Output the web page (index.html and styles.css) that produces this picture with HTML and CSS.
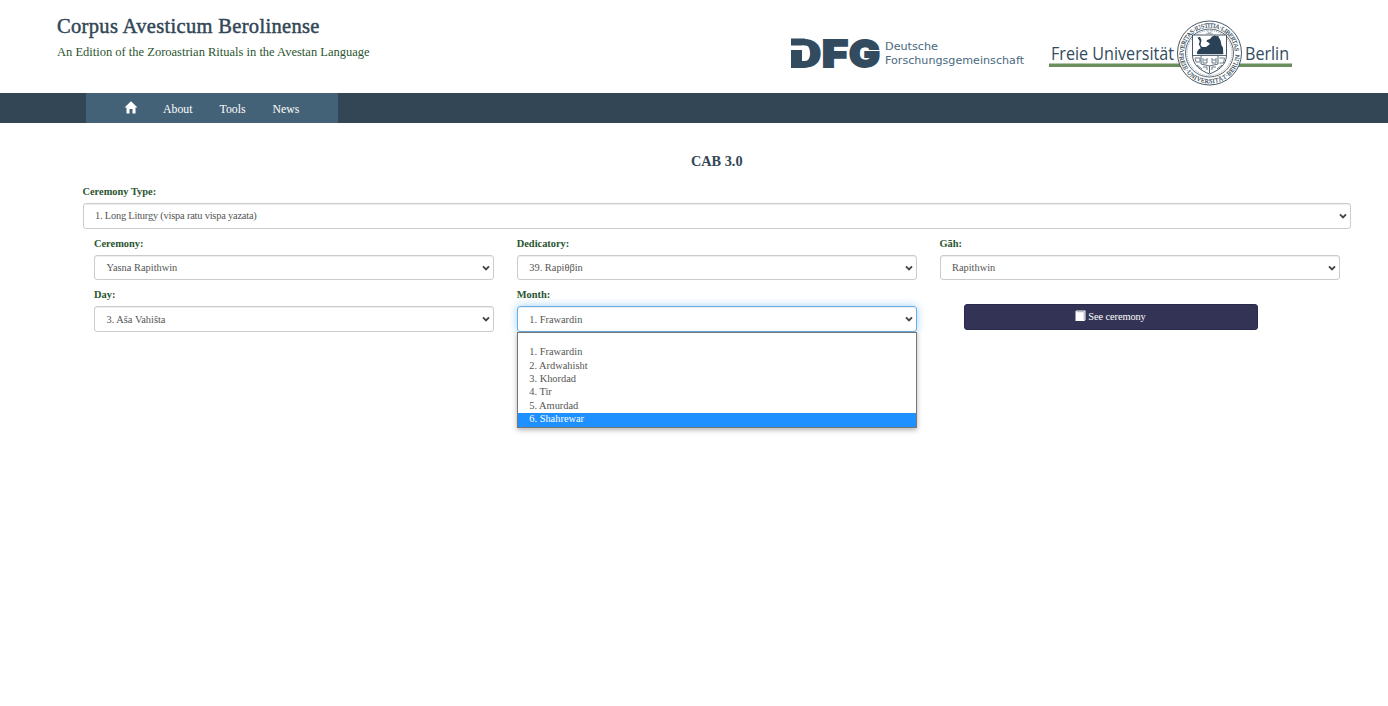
FILE: index.html
```html
<!DOCTYPE html>
<html lang="en">
<head>
<meta charset="utf-8">
<title>Corpus Avesticum Berolinense</title>
<link rel="stylesheet" href="styles.css">
</head>
<body>
<header class="header">
  <div class="brand">
    <h1 class="brand-title">Corpus Avesticum Berolinense</h1>
    <p class="brand-sub">An Edition of the Zoroastrian Rituals in the Avestan Language</p>
  </div>
  <div class="logos">
    <svg class="logo-dfg" width="236" height="40" viewBox="0 0 236 40">
      <g class="dfg-mark">
        <text x="1" y="31.500" textLength="31" lengthAdjust="spacingAndGlyphs">D</text>
        <text x="33" y="31.500" textLength="26" lengthAdjust="spacingAndGlyphs">F</text>
        <text x="60" y="31.500" textLength="31" lengthAdjust="spacingAndGlyphs">G</text>
      </g>
      <path d="M1 3H15V33H1z" fill="#fff"/>
      <path d="M2 3.500H16v7H2zM2 15H13V26H16v7H2z" fill="#324b5e"/>
      <path d="M13 10.500h3q4.500 0 4.500 5v5q0 5.500-5 5.500H13z" fill="#fff"/>
      <text class="dfg-name" x="96" y="15" textLength="53" lengthAdjust="spacingAndGlyphs">Deutsche</text>
      <text class="dfg-name" x="96" y="28.500" textLength="139" lengthAdjust="spacingAndGlyphs">Forschungsgemeinschaft</text>
    </svg>
    <svg class="logo-fu" width="244" height="66" viewBox="0 0 244 66">
      <defs>
        <path id="ring-top" d="M136 33a25.500 25.500 0 1 1 51 0"/>
        <path id="ring-bottom" d="M131.200 33a30.300 30.300 0 0 0 60.600 0"/>
      </defs>
      <rect x="1" y="43.500" width="243" height="3.500" fill="#6b8e5f"/>
      <text class="fu-name" x="3" y="40" textLength="123" lengthAdjust="spacingAndGlyphs">Freie Universität</text>
      <text class="fu-name" x="197" y="40" textLength="44" lengthAdjust="spacingAndGlyphs">Berlin</text>
      <g fill="none" stroke="#324656">
        <circle cx="161.500" cy="33" r="32" fill="#fff" stroke-width=".9"/>
        <circle cx="161.500" cy="33" r="24" stroke-width=".8"/>
        <circle cx="161.500" cy="33" r="22.500" stroke-width=".5" stroke-dasharray="1 1"/>
      </g>
      <text class="seal-text"><textPath href="#ring-top" textLength="78">VERITAS·IUSTITIA·LIBERTAS</textPath></text>
      <text class="seal-text"><textPath href="#ring-bottom" textLength="93">FREIE·UNIVERSITÄT·BERLIN</textPath></text>
      <path d="M144.500 15h34v20c0 10-8 15.500-17 19-9-3.500-17-9-17-19z" fill="#fff" stroke="#324656" stroke-width=".9"/>
      <path d="M149.500 17.500l2.500-.5 1.500 3-1 5 1.500 2 4 0 4-3-1.500-1.500-2-1 .5-1.500 3-1 2-2.500 3-1 1.500.8 1.800-.6.6 2 1.600 2.500 1 5 1.500 2.500.3 6.500h-26l-.5-2 2-3 2-1-2-4 1-3z" fill="#2b4156"/>
      <path d="M145 35.500h33M161.500 46v7M153 36v8l8.500 2 8.500-2v-8" fill="none" stroke="#324656" stroke-width=".8"/>
      <path d="M147 38h5v4h-4zM155 38v5h4v-5M164 38v5h4v-5M171.500 38h5l-1 5h-4M155 47h4v3M164 50v-3h4M156 40h3M164 40h4M149 45l5 4M174 45l-5 4" fill="none" stroke="#6d7d8a" stroke-width="1"/>
      <path d="M159.500 10.500l1 2.500h2l1-2.500M158 13.700h7" fill="none" stroke="#6d7d8a" stroke-width=".6"/>
    </svg>
  </div>
</header>
<nav class="nav">
  <div class="nav-menu">
    <a class="nav-home"><svg width="14" height="13" viewBox="0 0 14 13"><path d="M7 .3 13.500 6.500H11.500V12.500H8.500V8H5.500V12.500H2.500V6.500H.5z" fill="#fff"/></svg></a>
    <a class="nav-link about">About</a>
    <a class="nav-link tools">Tools</a>
    <a class="nav-link news">News</a>
  </div>
</nav>
<main class="main">
  <h2 class="title">CAB 3.0</h2>
  <div class="field">
    <div class="label">Ceremony Type:</div>
    <div class="select"><span class="liturgy">1. Long Liturgy (vispa ratu vispa yazata)</span><svg class="chev" viewBox="0 0 8 6"><path d="M1 1.300 4 4.300 7 1.300"/></svg></div>
  </div>
  <div class="grid">
    <div class="field">
      <div class="label">Ceremony:</div>
      <div class="select"><span>Yasna Rapithwin</span><svg class="chev" viewBox="0 0 8 6"><path d="M1 1.300 4 4.300 7 1.300"/></svg></div>
    </div>
    <div class="field">
      <div class="label">Dedicatory:</div>
      <div class="select"><span>39. Rapiθβin</span><svg class="chev" viewBox="0 0 8 6"><path d="M1 1.300 4 4.300 7 1.300"/></svg></div>
    </div>
    <div class="field">
      <div class="label">Gāh:</div>
      <div class="select"><span>Rapithwin</span><svg class="chev" viewBox="0 0 8 6"><path d="M1 1.300 4 4.300 7 1.300"/></svg></div>
    </div>
    <div class="field">
      <div class="label">Day:</div>
      <div class="select"><span>3. Aša Vahišta</span><svg class="chev" viewBox="0 0 8 6"><path d="M1 1.300 4 4.300 7 1.300"/></svg></div>
    </div>
    <div class="field month">
      <div class="label">Month:</div>
      <div class="select focused"><span>1. Frawardin</span><svg class="chev" viewBox="0 0 8 6"><path d="M1 1.300 4 4.300 7 1.300"/></svg></div>
      <div class="options">
        <div class="option blank"></div>
        <div class="option">1. Frawardin</div>
        <div class="option">2. Ardwahisht</div>
        <div class="option">3. Khordad</div>
        <div class="option">4. Tir</div>
        <div class="option">5. Amurdad</div>
        <div class="option selected">6. Shahrewar</div>
      </div>
    </div>
    <div class="action">
      <button class="button"><svg width="11" height="12" viewBox="0 0 11 12"><path d="M.5 1.500 1.500.5h9v9l-1 1.500h-9z" fill="#fff"/><path d="M1.500 1.700h7.700v8.500" fill="none" stroke="#8c8c9c" stroke-width=".7"/></svg><span>See ceremony</span></button>
    </div>
  </div>
</main>
</body>
</html>
```
FILE: styles.css
```css
* { box-sizing: border-box; }
body {
  margin: 0;
  min-height: 706px;
  background: #fff;
  color: #2a5530;
  font-family: "Liberation Serif", "Times New Roman", serif;
  font-size: 10.4px;
}
.header {
  height: 93px;
  display: flex;
  justify-content: space-between;
  padding: 0 96px 0 57px;
}
.brand-title {
  margin: 14px 0 0;
  font-size: 20.5px;
  line-height: 24px;
  font-weight: 400;
  letter-spacing: .33px;
  color: #324656;
  -webkit-text-stroke: .45px #324656;
  white-space: nowrap;
}
.brand-sub {
  margin: 6px 0 0;
  font-size: 12.5px;
  line-height: 16px;
  white-space: nowrap;
}
.logos { display: flex; gap: 23px; align-items: flex-start; }
.logo-dfg { margin-top: 35px; }
.logo-fu { margin-top: 20px; }
.dfg-mark { font: 900 37px Inter, sans-serif; fill: #324b5e; stroke: #324b5e; stroke-width: 1.8px; }
.dfg-name { font: 11px "DejaVu Sans", sans-serif; fill: #496980; }
.fu-name { font: 18.5px "Open Sans", sans-serif; fill: #324b5e; }
.seal-text { font: 6.3px "Liberation Serif", serif; fill: #324656; stroke: #324656; stroke-width: .15px; }
.nav { height: 30px; background: #324656; padding-left: 86px; }
.nav-menu {
  width: 252px;
  height: 30px;
  padding-left: 38px;
  background: #446277;
  display: flex;
  align-items: center;
  color: #fff;
  font-size: 11.8px;
}
.nav-home { width: 39px; height: 13px; margin-top: -2px; }
.nav-link { line-height: 16px; margin-top: 1px; }
.about { width: 56.500px; }
.tools { width: 53px; }
.main { padding: 30px 37px 0 82.500px; }
.title {
  margin: 0;
  font-size: 14.3px;
  line-height: 16px;
  font-weight: 700;
  text-align: center;
  color: #324656;
}
.main > .field { margin-top: 15px; }
.label { height: 19px; line-height: 16px; font-weight: 700; }
.select {
  height: 25.700px;
  border: 1px solid #ccc;
  border-radius: 3px;
  box-shadow: inset 0 1px 1px rgba(0, 0, 0, .075);
  padding: 0 3px 0 11.500px;
  display: flex;
  align-items: center;
  justify-content: space-between;
  color: #555;
  white-space: nowrap;
}
.liturgy { letter-spacing: -.2px; }
.select.focused {
  border-color: #66afe9;
  box-shadow: inset 0 1px 1px rgba(0, 0, 0, .075), 0 0 8px rgba(102, 175, 233, .6);
}
.chev { width: 8px; height: 6px; }
.chev path { fill: none; stroke: #444; stroke-width: 1.900; }
.grid {
  margin: 7px 11.500px 0;
  display: grid;
  grid-template-columns: repeat(3, 400px);
  justify-content: space-between;
  row-gap: 6.900px;
}
.month { position: relative; }
.options {
  position: absolute;
  z-index: 2;
  left: 0;
  top: 44.500px;
  width: 400px;
  background: #fff;
  border: 1px solid #777;
  box-shadow: 0 2px 5px rgba(0, 0, 0, .3);
  color: #555;
}
.option { height: 13.400px; line-height: 12.400px; padding-left: 11.500px; }
.selected { background: #1e90ff; color: #fff; }
.action { padding: 17px 82px 0 24px; }
.button {
  width: 100%;
  height: 26px;
  border: 1px solid #29294d;
  border-radius: 3px;
  background: #333355;
  color: #fff;
  font: inherit;
  letter-spacing: -.1px;
  padding: 0 0 2px;
  display: flex;
  align-items: center;
  justify-content: center;
  gap: 2px;
}
```
